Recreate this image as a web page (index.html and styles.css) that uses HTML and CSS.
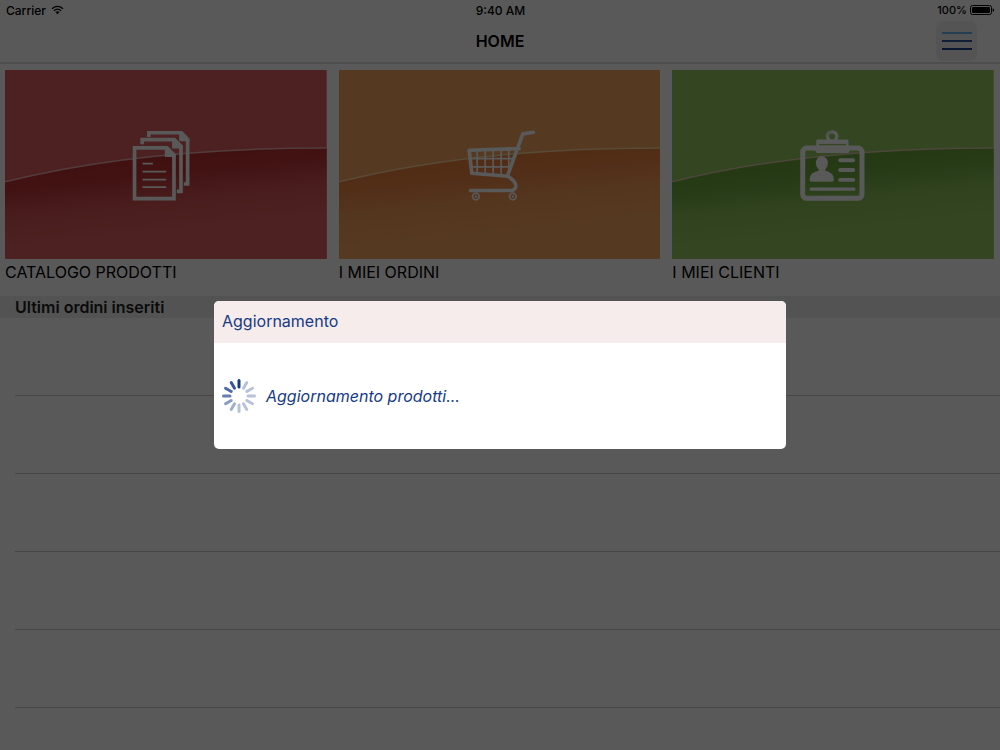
FILE: index.html
```
<!DOCTYPE html>
<html lang="it">
<head>
<meta charset="utf-8">
<meta name="viewport" content="width=device-width, initial-scale=1">
<title>Home</title>
<link rel="stylesheet" href="styles.css">
</head>
<body>
<div class="app">
  <header class="topbar">
    <div class="status">
      <div class="status-left">
        <span>Carrier</span>
        <svg class="wifi" viewBox="0 0 13 10" aria-hidden="true"><path d="M1 3.700Q6.500-.9 12 3.700M2.900 5.700Q6.500 2.700 10.100 5.700" fill="none" stroke="#000" stroke-width="1.300"/><path d="M4.300 7.100Q6.500 5.300 8.700 7.100L6.500 9.300Z"/></svg>
      </div>
      <span class="clock">9:40 AM</span>
      <div class="status-right">
        <span>100%</span>
        <svg class="battery" viewBox="0 0 25 10" aria-hidden="true"><rect x=".5" y=".5" width="21" height="9" rx="2" fill="none" stroke="#000"/><rect x="2" y="2" width="18" height="6" rx="1"/><path d="M22.700 3.200q1.500.4 1.500 1.800t-1.500 1.800z"/></svg>
      </div>
    </div>
    <div class="nav">
      <h1 class="title">HOME</h1>
      <button class="menu" type="button" aria-label="Menu">
        <svg viewBox="0 0 30 20" aria-hidden="true"><path d="M0 2h30" stroke="#6bb0ee"/><path d="M0 10h30" stroke="#33589f"/><path d="M0 18h30" stroke="#1c3f90"/></svg>
      </button>
    </div>
  </header>

  <main>
    <nav class="cards">
      <a class="card" href="#catalogo">
        <svg class="tile" viewBox="0 0 322 189" aria-hidden="true">
          <defs><linearGradient id="red" gradientUnits="userSpaceOnUse" x1="0" y1="108" x2="7" y2="175"><stop offset="0" stop-color="#bb3233"/><stop offset=".2" stop-color="#bf3738"/><stop offset=".6" stop-color="#d45455"/><stop offset="1" stop-color="#dc5c5e"/></linearGradient></defs>
          <path fill="#dc5c5e" d="M0 0h322v189H0z"/>
          <path fill="url(#red)" d="M0 112Q135 78 322 78V189H0z"/>
          <path d="M0 112Q135 78 322 78" fill="none" stroke="#eaacad" stroke-width="1.500"/>
          <g transform="translate(115 50) scale(.3333)">
            <g fill="none" stroke="#fff" stroke-width="11">
              <path d="M87 51V38.500H184L203.500 60V192.500H192"/>
              <path d="M67 73V59H162L183.500 81V214.500H171"/>
              <path d="M44 84H140L162.500 106V236.500H44z"/>
            </g>
            <path fill="#fff" d="M178 33h9l22 23v8h-31zM157 54h9l23 23v9h-32zM135 79h9l24 24v8h-33z"/>
            <path fill="none" stroke="#fff" stroke-width="5" d="M68 131h31M68 155h71M68 179h71M68 202h71"/>
          </g>
        </svg>
        <span class="card-label">CATALOGO PRODOTTI</span>
      </a>
      <a class="card" href="#ordini">
        <svg class="tile" viewBox="0 0 322 189" aria-hidden="true">
          <defs><linearGradient id="orange" gradientUnits="userSpaceOnUse" x1="0" y1="108" x2="7" y2="175"><stop offset="0" stop-color="#ea8140"/><stop offset=".2" stop-color="#eb8444"/><stop offset=".6" stop-color="#f19b56"/><stop offset="1" stop-color="#f3a35c"/></linearGradient></defs>
          <path fill="#f3a35c" d="M0 0h322v189H0z"/>
          <path fill="url(#orange)" d="M0 112Q135 78 322 78V189H0z"/>
          <path d="M0 112Q135 78 322 78" fill="none" stroke="#f8d49a" stroke-width="1.500"/>
          <g transform="translate(116.300 50) scale(.3333)" fill="none" stroke="#fff" stroke-linecap="round" stroke-linejoin="round">
            <path stroke-width="11" d="M235 37L203 42L157 168Q184 186 182 200Q180 212 165 212H46M192 86L42 91L50 160L157 169"/>
            <path stroke-width="5" d="M66 91V160M90 90V162M114 89V164M138 88V166M161 88V152M46 116H178M49 141H168"/>
            <path stroke-width="5" d="M62 220a10 10 0 1 0 .1 0zM173 220a10 10 0 1 0 .1 0z"/>
            <path stroke-width="7" d="M62 230h.1M173 230h.1"/>
          </g>
        </svg>
        <span class="card-label">I MIEI ORDINI</span>
      </a>
      <a class="card" href="#clienti">
        <svg class="tile" viewBox="0 0 322 189" aria-hidden="true">
          <defs><linearGradient id="green" gradientUnits="userSpaceOnUse" x1="0" y1="108" x2="7" y2="175"><stop offset="0" stop-color="#6ba33d"/><stop offset=".2" stop-color="#70a843"/><stop offset=".6" stop-color="#8bbf58"/><stop offset="1" stop-color="#92c55e"/></linearGradient></defs>
          <path fill="#92c55e" d="M0 0h322v189H0z"/>
          <path fill="url(#green)" d="M0 112Q135 78 322 78V189H0z"/>
          <path d="M0 112Q135 78 322 78" fill="none" stroke="#dcc8a8" stroke-width="1.500"/>
          <g transform="translate(117.700 50) scale(.3333)">
            <rect x="39.500" y="84.500" width="178" height="151" rx="12" fill="none" stroke="#fff" stroke-width="15"/>
            <path fill="#fff" d="M84 59H173q4 0 4 4V78h3v15q0 6-6 6H84q-6 0-6-6V78h2V63q0-4 4-4z"/>
            <path stroke="#92c55e" stroke-width="4" d="M88 74h82"/>
            <circle cx="128" cy="50" r="14" fill="#92c55e" stroke="#fff" stroke-width="10"/>
            <path fill="none" stroke="#92c55e" stroke-width="2" d="M126 36q-11 3-11 14"/>
            <g fill="#fff"><ellipse cx="97" cy="130" rx="18" ry="21"/><path d="M88 143h19v9q26 7 26 26 0 8-8 8H68q-8 0-8-8 0-19 28-26z"/></g>
            <path fill="none" stroke="#fff" stroke-width="12" stroke-linecap="round" d="M152 121h39M152 150h39M152 180h39"/>
            <path fill="none" stroke="#fff" stroke-width="10" stroke-linecap="round" d="M65 208h128"/>
          </g>
        </svg>
        <span class="card-label">I MIEI CLIENTI</span>
      </a>
    </nav>
    <section>
      <h2 class="section-title">Ultimi ordini inseriti</h2>
      <ul class="orders"><li></li><li></li><li></li><li></li><li></li></ul>
    </section>
  </main>
</div>

<div class="overlay">
  <div class="dialog" role="dialog" aria-modal="true" aria-labelledby="dialog-title">
    <h2 class="dialog-title" id="dialog-title">Aggiornamento</h2>
    <div class="dialog-body">
      <svg class="spinner" viewBox="-17 -17 34 34" aria-hidden="true">
        <g stroke="#153a87" stroke-width="3" stroke-linecap="round">
          <path d="M0-9v-6.500"/>
          <path d="M0-9v-6.500" transform="rotate(330)" opacity=".85"/>
          <path d="M0-9v-6.500" transform="rotate(300)" opacity=".75"/>
          <path d="M0-9v-6.500" transform="rotate(270)" opacity=".65"/>
          <path d="M0-9v-6.500" transform="rotate(240)" opacity=".5"/>
          <path d="M0-9v-6.500" transform="rotate(210)" opacity=".4"/>
          <path d="M0-9v-6.500" transform="rotate(180)" opacity=".3"/>
          <path d="M0-9v-6.500" transform="rotate(150)" opacity=".3"/>
          <path d="M0-9v-6.500" transform="rotate(120)" opacity=".3"/>
          <path d="M0-9v-6.500" transform="rotate(90)" opacity=".3"/>
          <path d="M0-9v-6.500" transform="rotate(60)" opacity=".3"/>
          <path d="M0-9v-6.500" transform="rotate(30)" opacity=".3"/>
        </g>
      </svg>
      <p class="message">Aggiornamento prodotti...</p>
    </div>
  </div>
</div>
</body>
</html>
```

FILE: styles.css
```
* { box-sizing: border-box; }
body { margin: 0; background: #fff; color: #000; font-family: Inter, "Liberation Sans", sans-serif; font-size: 16px; }
h1, h2, p, ul { margin: 0; padding: 0; }
.app { min-height: 100vh; }
.topbar { border-bottom: 2px solid #dedede; }
.status { display: grid; grid-template-columns: 1fr auto 1fr; align-items: center; height: 20px; padding: 0 5px 0 6px; font-size: 12px; font-weight: 500; }
.status-left, .status-right { display: flex; align-items: center; gap: 5px; }
.status-right { justify-content: flex-end; gap: 3px; font-size: 11px; }
.wifi { width: 13px; height: 10px; }
.battery { width: 25px; height: 10px; }
.nav { display: grid; grid-template-columns: 1fr auto 1fr; align-items: center; height: 42px; padding: 0 23px; }
.title { grid-column: 2; font-size: 16px; font-weight: 600; }
.menu { justify-self: end; display: grid; place-items: center; width: 41px; height: 40px; padding: 0; border: 0; border-radius: 8px; background: #efefef; }
.menu svg { width: 30px; height: 20px; stroke-width: 2; }
.cards { display: grid; grid-template-columns: repeat(3, 1fr); gap: 12px; padding: 6px 6px 0 5px; }
.card { color: #000; text-decoration: none; }
.tile { display: block; width: 100%; height: auto; }
.card-label { display: block; padding-top: 3px; line-height: 20px; }
.section-title { margin-top: 14px; padding-left: 15px; background: #eee; font-size: 16px; font-weight: 600; line-height: 22px; color: #222; }
.orders { list-style: none; padding-left: 15px; }
.orders li { height: 78px; border-bottom: 1px solid #c8c8c8; }
.overlay { position: fixed; inset: 0; display: flex; align-items: center; justify-content: center; background: rgba(0, 0, 0, .65); }
.dialog { width: 572px; max-width: 90%; border-radius: 5px; overflow: hidden; background: #fff; color: #153a87; }
.dialog-title { padding: 0 8px 2px; background: #f6eceb; font-size: 16px; font-weight: 400; line-height: 40px; }
.dialog-body { display: flex; align-items: center; gap: 10px; padding: 35px 8px; }
.spinner { width: 34px; height: 36px; }
.message { font-style: italic; }
```
